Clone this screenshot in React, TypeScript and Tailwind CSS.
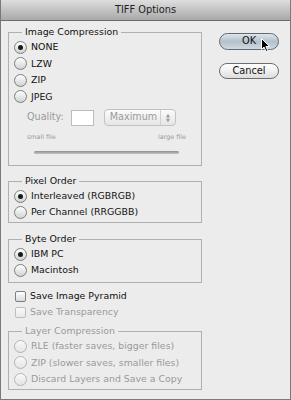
import React from "react";

const font = "font-['DejaVu_Sans',sans-serif]";

const Radio = ({ checked = false, disabled = false }: { checked?: boolean; disabled?: boolean }) => (
  <span
    className={`flex h-[13px] w-[13px] shrink-0 items-center justify-center rounded-full border bg-gradient-to-b ${
      disabled ? "border-[#b4b4b4] from-[#fafafa] to-[#e4e4e4]" : "border-[#7e7e7e] from-white to-[#d2d2d2]"
    }`}
  >
    {checked && <span className="h-[5px] w-[5px] rounded-full bg-[#1a1a1a]" />}
  </span>
);

const Check = ({ disabled = false }: { disabled?: boolean }) => (
  <span
    className={`h-[11px] w-[11px] shrink-0 rounded-[2px] border bg-gradient-to-b ${
      disabled ? "border-[#bdbdbd] from-[#fafafa] to-[#e8e8e8]" : "border-[#7e7e7e] from-white to-[#dadada]"
    }`}
  />
);

const RadioRow = ({
  label,
  checked,
  disabled,
  h = "h-[16px]",
}: {
  label: string;
  checked?: boolean;
  disabled?: boolean;
  h?: string;
}) => (
  <div className={`flex items-center gap-[4px] whitespace-nowrap ${h}`}>
    <Radio checked={checked} disabled={disabled} />
    <span className={disabled ? "text-[#9a9a9a]" : "text-[#111]"}>{label}</span>
  </div>
);

const Group = ({
  title,
  disabled,
  className = "",
  children,
}: {
  title: string;
  disabled?: boolean;
  className?: string;
  children: React.ReactNode;
}) => (
  <fieldset className={`border border-[#b0b0b0] px-[5px] ${className}`}>
    <legend className={`ml-[8px] px-[3px] leading-[14px] ${disabled ? "text-[#9a9a9a]" : "text-[#111]"}`}>
      {title}
    </legend>
    {children}
  </fieldset>
);

export default function App() {
  return (
    <div className={`relative flex h-[400px] w-[291px] flex-col overflow-hidden border-x border-b border-[#7a7a7a] bg-[#ececec] text-[9.4px] ${font}`}>
      <div className="flex h-[21px] shrink-0 items-center justify-center border-b border-[#6c6c6c] bg-gradient-to-b from-[#dedede] to-[#a9a9a9] text-[9.8px] text-[#222]">
        TIFF Options
      </div>

      <div className="flex pt-[4px]">
        <div className="ml-[7px] flex w-[194px] flex-col">
          <Group title="Image Compression" className="pb-[8px]">
            <RadioRow label="NONE" checked h="h-[16.5px]" />
            <RadioRow label="LZW" h="h-[16.5px]" />
            <RadioRow label="ZIP" h="h-[16.5px]" />
            <RadioRow label="JPEG" h="h-[16.5px]" />
            <div className="mt-[4px] flex h-[17px] items-center pl-[13px] text-[#9a9a9a]">
              <span className="text-[9.6px]">Quality:</span>
              <span className="ml-[7px] h-[16px] w-[23px] border border-[#bcbcbc] bg-white" />
              <span className="ml-[10px] flex h-[17px] w-[72px] items-center rounded-[4px] border border-[#c2c2c2] bg-gradient-to-b from-[#fbfbfb] to-[#e6e6e6] pl-[5px]">
                <span className="flex-1 text-[9.6px]">Maximum</span>
                <span className="flex h-full w-[15px] flex-col items-center justify-center border-l border-[#d0d0d0] text-[5px] leading-[5px] text-[#9a9a9a]">
                  <span>▲</span>
                  <span>▼</span>
                </span>
              </span>
            </div>
            <div className="mt-[7px] flex h-[10px] items-center justify-between pl-[13px] pr-[10px] text-[6.4px] text-[#9a9a9a]">
              <span>small file</span>
              <span>large file</span>
            </div>
            <div className="mt-[4px] flex h-[10px] items-center pl-[20px] pr-[17px]">
              <span className="h-[3px] w-full rounded-full bg-gradient-to-b from-[#8e8e8e] to-[#c4c4c4]" />
            </div>
          </Group>

          <Group title="Pixel Order" className="mt-[8px] pb-[2px]">
            <RadioRow label="Interleaved (RGBRGB)" checked />
            <RadioRow label="Per Channel (RRGGBB)" />
          </Group>

          <Group title="Byte Order" className="mt-[9px] pb-[4px]">
            <RadioRow label="IBM PC" checked />
            <RadioRow label="Macintosh" />
          </Group>

          <div className="mt-[5px] flex h-[16px] items-center gap-[4px] pl-[7px] text-[#111]">
            <Check />
            <span>Save Image Pyramid</span>
          </div>
          <div className="flex h-[17px] items-center gap-[4px] pl-[7px] text-[#9a9a9a]">
            <Check disabled />
            <span>Save Transparency</span>
          </div>

          <Group title="Layer Compression" disabled className="mt-[3px] pb-[1px]">
            <RadioRow label="RLE (faster saves, bigger files)" disabled h="h-[16.5px]" />
            <RadioRow label="ZIP (slower saves, smaller files)" disabled h="h-[16.5px]" />
            <RadioRow label="Discard Layers and Save a Copy" disabled h="h-[16.5px]" />
          </Group>
        </div>

        <div className="ml-[17px] flex w-[60px] flex-col gap-[13px] pt-[8px] text-[9.8px]">
          <button className="flex h-[17px] items-center justify-center rounded-full border border-[#5f6a73] bg-gradient-to-b from-[#dfe6eb] via-[#b3c1cb] to-[#cfd9e0] text-[#111]">
            OK
          </button>
          <button className="flex h-[16px] items-center justify-center rounded-full border border-[#6e6e6e] bg-gradient-to-b from-white via-[#f0f0f0] to-[#dcdcdc] text-[#111]">
            Cancel
          </button>
        </div>
      </div>

      <svg className="absolute left-[260px] top-[38px]" width="10" height="15" viewBox="0 0 10 15">
        <path d="M0.5 0.5 L0.5 11.5 L3 9 L5 13.5 L6.8 12.7 L4.9 8.5 L8.5 8.5 Z" fill="#000" stroke="#fff" strokeWidth="1" />
      </svg>
    </div>
  );
}
